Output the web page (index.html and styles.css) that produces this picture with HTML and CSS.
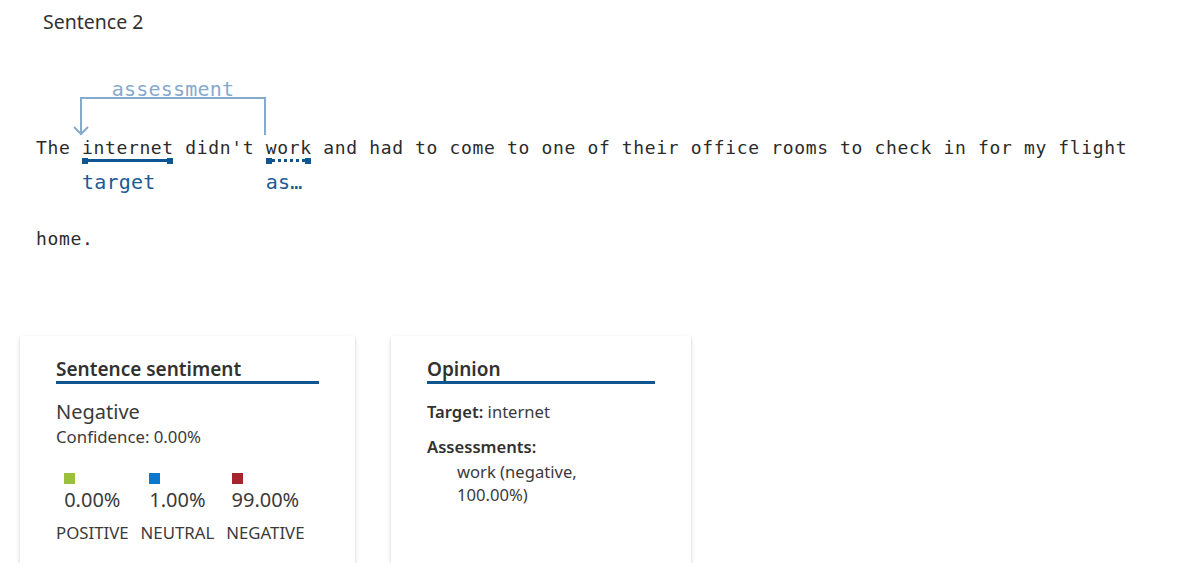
FILE: index.html
```html
<!DOCTYPE html>
<html lang="en">
<head>
<meta charset="utf-8">
<title>Sentence 2</title>
<link rel="stylesheet" href="styles.css">
</head>
<body>
<div class="page">
  <h2 class="title">Sentence 2</h2>
  <p class="sentence"><span class="arc"><span class="arc-label">assessment</span><svg class="arrow" width="18" height="10" viewBox="0 0 18 10"><polyline points="2,1 9,8 16,1" fill="none" stroke="#86aace" stroke-width="2"/></svg></span>The <span class="tok">internet<span class="ul"></span><span class="tag">target</span></span> didn't <span class="tok">work<span class="ul ul-dotted"></span><span class="tag">as…</span></span> and had to come to one of their office rooms to check in for my flight home.</p>
  <div class="cards">
    <section class="card card-sentiment">
      <h3 class="card-title">Sentence sentiment</h3>
      <div class="overall">Negative</div>
      <div class="confidence">Confidence: 0.00%</div>
      <div class="scores">
        <div class="score">
          <div class="score-val"><span class="swatch swatch-pos"></span><span class="pct">0.00%</span></div>
          <div class="score-label">POSITIVE</div>
        </div>
        <div class="score">
          <div class="score-val"><span class="swatch swatch-neu"></span><span class="pct">1.00%</span></div>
          <div class="score-label">NEUTRAL</div>
        </div>
        <div class="score">
          <div class="score-val"><span class="swatch swatch-neg"></span><span class="pct">99.00%</span></div>
          <div class="score-label">NEGATIVE</div>
        </div>
      </div>
    </section>
    <section class="card card-opinion">
      <h3 class="card-title">Opinion</h3>
      <div class="row"><span class="key">Target:</span> internet</div>
      <div class="row row-assess"><span class="key">Assessments:</span></div>
      <div class="assess-item">work (negative, 100.00%)</div>
    </section>
  </div>
</div>
</body>
</html>
```
FILE: styles.css
```css
html, body {
  margin: 0;
  padding: 0;
  background: #ffffff;
}

.page {
  font-family: "Noto Sans", "Open Sans", sans-serif;
  color: #323130;
}

.title {
  margin: 9px 0 0 43px;
  font-size: 19.5px;
  line-height: 26px;
  font-weight: 400;
  color: #323130;
}

.sentence {
  position: relative;
  margin: 66.5px 0 0 0;
  padding-left: 36px;
  font-family: "DejaVu Sans Mono", "Liberation Mono", monospace;
  font-size: 18px;
  letter-spacing: 0.65px;
  line-height: 91px;
  color: #2b2b2b;
}

.tok {
  position: relative;
}

.ul {
  position: absolute;
  left: 0;
  right: 0.65px;
  top: 22.5px;
  height: 3px;
  background: #0f5592;
}

.ul::before,
.ul::after {
  content: "";
  position: absolute;
  top: -1.5px;
  width: 6px;
  height: 6px;
  background: #0f5592;
}

.ul::before { left: 0; }
.ul::after { right: 0; }

.ul-dotted {
  background: repeating-linear-gradient(90deg, #0f5592 0 3px, transparent 3px 6px);
}

.tag {
  position: absolute;
  left: 0;
  top: 33.5px;
  font-size: 20px;
  line-height: 24px;
  letter-spacing: 0.2px;
  color: #1d5b93;
  white-space: nowrap;
}

.arc {
  position: absolute;
  left: 80px;
  top: -4.5px;
  width: 182px;
  height: 36px;
  border: 2px solid #86aace;
  border-bottom: none;
}

.arc-label {
  position: absolute;
  left: 0;
  right: 0;
  bottom: 100%;
  text-align: center;
  font-size: 20px;
  line-height: 20px;
  letter-spacing: 0.2px;
  color: #86aace;
}

.arrow {
  position: absolute;
  left: -10px;
  bottom: -1px;
  display: block;
}

.cards {
  display: flex;
  gap: 36px;
  margin-top: 52.5px;
  padding-left: 20px;
  align-items: stretch;
}

.card {
  background: #ffffff;
  padding: 21px 36px 20px;
  box-shadow: 0 1.6px 4px rgba(0, 0, 0, 0.17), 0 0.3px 1px rgba(0, 0, 0, 0.13);
}

.card-sentiment { width: 263px; }
.card-opinion { width: 228px; }

.card-title {
  margin: 0;
  font-size: 19px;
  line-height: 24px;
  font-weight: 600;
  color: #323130;
  border-bottom: 3px solid #0f5592;
}

.overall {
  margin-top: 16px;
  font-size: 20px;
  line-height: 24px;
  color: #3b3a39;
}

.confidence {
  margin-top: 3px;
  font-size: 16.8px;
  line-height: 20px;
  color: #3b3a39;
}

.scores {
  display: flex;
  gap: 12px;
  margin-top: 26px;
}

.score {
  display: flex;
  flex-direction: column;
  align-items: center;
}

.score-val {
  display: flex;
  flex-direction: column;
  align-items: flex-start;
}

.swatch {
  display: block;
  width: 11px;
  height: 11px;
}

.swatch-pos { background: #9bc13c; }
.swatch-neu { background: #0b78d0; }
.swatch-neg { background: #a4262c; }

.pct {
  margin-top: 4px;
  font-size: 20px;
  line-height: 24px;
  color: #3b3a39;
}

.score-label {
  margin-top: 11px;
  font-size: 16.8px;
  line-height: 20px;
  color: #3b3a39;
}

.row {
  margin-top: 18px;
  font-size: 16.6px;
  line-height: 20px;
  color: #3b3a39;
}

.row-assess {
  margin-top: 15px;
}

.key {
  font-weight: 600;
  color: #323130;
}

.assess-item {
  margin-top: 2.5px;
  padding-left: 30px;
  width: 135px;
  font-size: 16.6px;
  line-height: 23px;
  color: #3b3a39;
}
```
